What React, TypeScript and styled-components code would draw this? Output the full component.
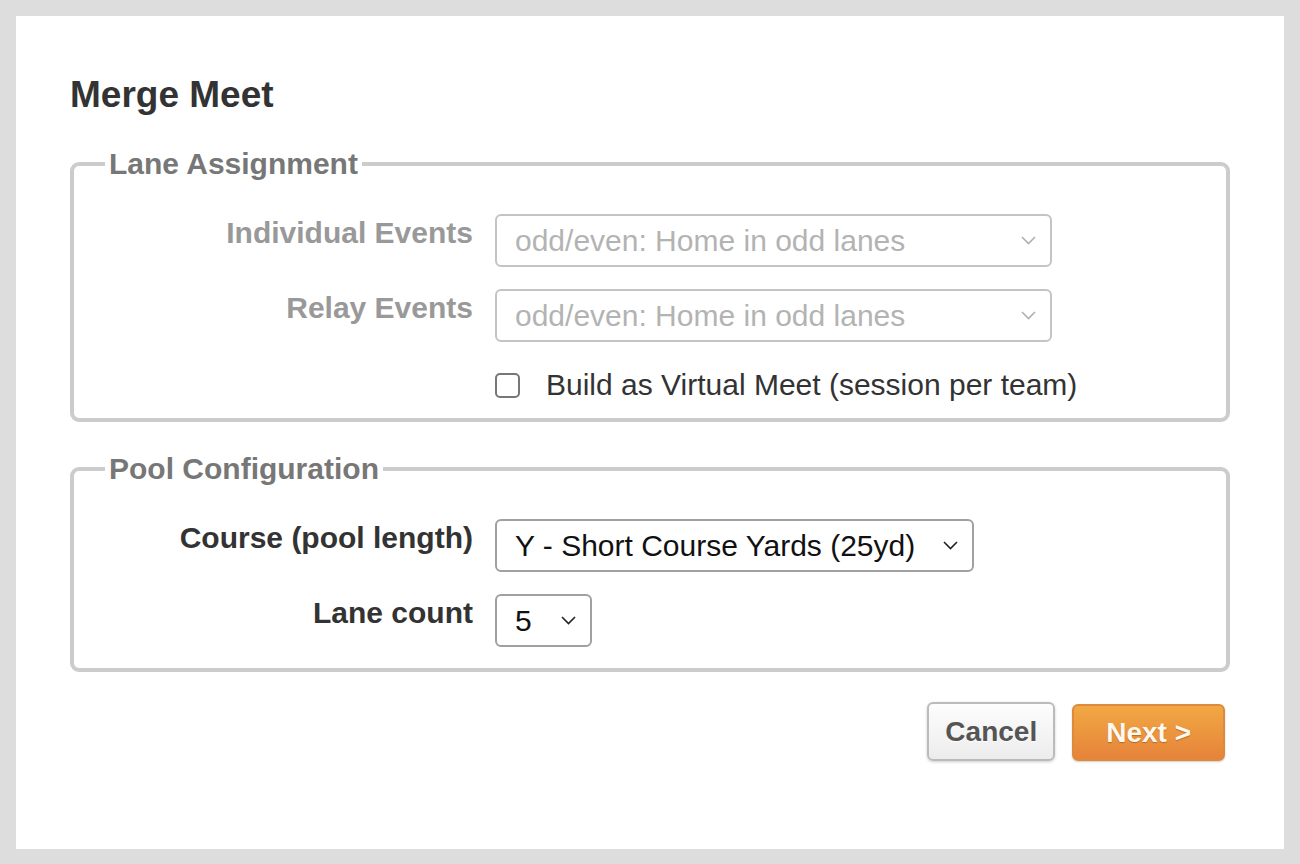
import styled, { createGlobalStyle } from 'styled-components'

const GlobalStyle = createGlobalStyle`
  html, body {
    margin: 0;
    padding: 0;
    background: #dddddd;
  }
  body {
    font-family: 'Liberation Sans', Arial, Helvetica, sans-serif;
    color: #333;
  }
`

const Page = styled.div`
  padding: 16px;
  min-height: 864px;
  box-sizing: border-box;
`

const Panel = styled.div`
  background: #fff;
  height: 833px;
  box-sizing: border-box;
  padding: 57px 54px 0;
`

const Title = styled.h1`
  margin: 0;
  font-size: 37px;
  line-height: 43px;
  font-weight: bold;
  color: #333;
`

const Group = styled.fieldset<{ $first?: boolean }>`
  margin: ${(p) => (p.$first ? '30px' : '29px')} 0 0;
  padding: 32px 0 ${(p) => (p.$first ? '15px' : '21px')};
  border: 4px solid #cccccc;
  border-radius: 9px;
  display: grid;
  grid-template-columns: 399px 1fr;
  column-gap: 22px;
  row-gap: 22px;
  align-items: start;
`

const Legend = styled.legend`
  margin-left: 31px;
  padding: 0 4px;
  font-size: 30px;
  line-height: 36px;
  font-weight: bold;
  color: #777;
`

const Label = styled.label<{ $disabled?: boolean }>`
  text-align: right;
  font-size: 30px;
  line-height: 36px;
  font-weight: bold;
  color: ${(p) => (p.$disabled ? '#999' : '#333')};
  padding-top: 1px;
`

const SelectWrap = styled.div<{ $w: number }>`
  position: relative;
  width: ${(p) => p.$w}px;
`

const Select = styled.select<{ $disabled?: boolean }>`
  appearance: none;
  -webkit-appearance: none;
  width: 100%;
  height: 53px;
  box-sizing: border-box;
  margin: 0;
  padding: 0 40px 0 18px;
  font-family: 'Liberation Sans', Arial, sans-serif;
  font-size: 30px;
  background: #fff;
  color: ${(p) => (p.$disabled ? '#b3b3b3' : '#111')};
  border: 2px solid ${(p) => (p.$disabled ? '#c4c4c4' : '#a0a0a0')};
  border-radius: 6px;
  opacity: 1;
`

const Chevron = styled.svg<{ $disabled?: boolean }>`
  position: absolute;
  right: 16px;
  top: 22px;
  width: 15px;
  height: 9px;
  pointer-events: none;
  stroke: ${(p) => (p.$disabled ? '#b0b0b0' : '#222')};
`

const CheckRow = styled.label`
  grid-column: 2;
  display: flex;
  align-items: center;
  gap: 26px;
  padding-top: 3px;
  font-size: 30px;
  line-height: 36px;
  color: #333;
`

const Check = styled.input`
  appearance: none;
  -webkit-appearance: none;
  margin: 0;
  width: 25px;
  height: 25px;
  border: 2px solid #777;
  border-radius: 5px;
  background: #fff;
`

const Actions = styled.div`
  display: flex;
  justify-content: flex-end;
  align-items: flex-end;
  gap: 17px;
  margin-top: 30px;
  padding-right: 5px;
`

const Button = styled.button<{ $primary?: boolean }>`
  font-family: 'Liberation Sans', Arial, sans-serif;
  font-size: 28px;
  font-weight: bold;
  border-radius: 6px;
  box-sizing: border-box;
  cursor: pointer;
  ${(p) =>
    p.$primary
      ? `
    height: 57px;
    padding: 0 32px;
    color: #fff8ee;
    background: linear-gradient(#f1a843, #e6833a);
    border: 2px solid #dd8a3c;
    text-shadow: 0 1px 1px rgba(120, 60, 0, 0.45);
    box-shadow: 0 1px 2px rgba(0, 0, 0, 0.2);
  `
      : `
    height: 59px;
    padding: 0 16px;
    color: #555;
    background: linear-gradient(#fdfdfd, #ececec);
    border: 2px solid #bbbbbb;
    text-shadow: 0 1px 1px #fff;
    box-shadow: 0 1px 3px rgba(0, 0, 0, 0.2);
  `}
`

function Dropdown({
  width,
  value,
  disabled,
}: {
  width: number
  value: string
  disabled?: boolean
}) {
  return (
    <SelectWrap $w={width}>
      <Select $disabled={disabled} defaultValue={value} tabIndex={disabled ? -1 : 0}>
        <option>{value}</option>
      </Select>
      <Chevron $disabled={disabled} viewBox="0 0 15 9" fill="none" strokeWidth="1.6">
        <polyline points="1,1 7.5,7.5 14,1" />
      </Chevron>
    </SelectWrap>
  )
}

export default function App() {
  return (
    <>
      <GlobalStyle />
      <Page>
        <Panel>
          <Title>Merge Meet</Title>
          <Group $first>
            <Legend>Lane Assignment</Legend>
            <Label $disabled>Individual Events</Label>
            <Dropdown width={557} value="odd/even: Home in odd lanes" disabled />
            <Label $disabled>Relay Events</Label>
            <Dropdown width={557} value="odd/even: Home in odd lanes" disabled />
            <CheckRow>
              <Check type="checkbox" />
              Build as Virtual Meet (session per team)
            </CheckRow>
          </Group>
          <Group>
            <Legend>Pool Configuration</Legend>
            <Label>Course (pool length)</Label>
            <Dropdown width={479} value="Y - Short Course Yards (25yd)" />
            <Label>Lane count</Label>
            <Dropdown width={97} value="5" />
          </Group>
          <Actions>
            <Button>Cancel</Button>
            <Button $primary>Next &gt;</Button>
          </Actions>
        </Panel>
      </Page>
    </>
  )
}
